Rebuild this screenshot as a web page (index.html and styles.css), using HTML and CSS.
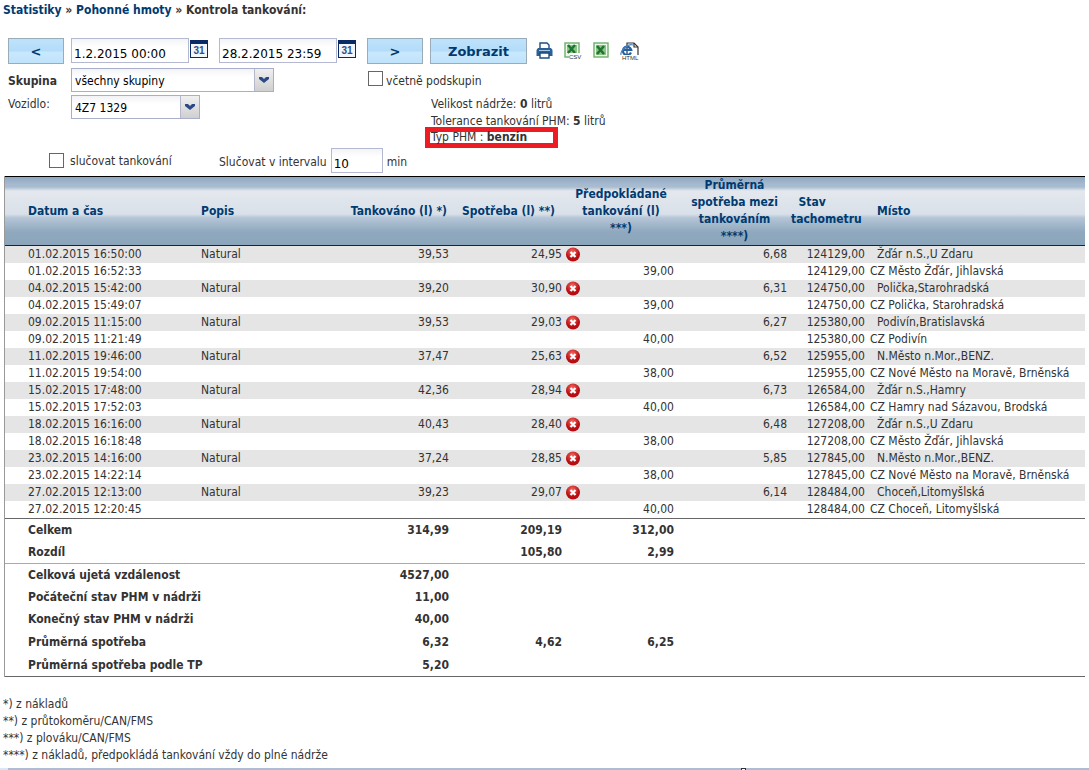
FILE: index.html
```html
<!DOCTYPE html>
<html lang="cs">
<head>
<meta charset="utf-8">
<title>Kontrola tankování</title>
<link rel="stylesheet" href="styles.css">
</head>
<body>
<nav class="crumbs"><a href="#">Statistiky</a> » <a href="#">Pohonné hmoty</a> » Kontrola tankování:</nav>

<form class="filters">
  <div class="toolbar">
    <button type="button" class="btn btn-step">&lt;</button>
    <div class="date">
      <input class="field field-date" type="text" aria-label="Od" value="1.2.2015 00:00">
      <button type="button" class="cal" aria-label="Kalendář">31</button>
    </div>
    <div class="date">
      <input class="field field-date" type="text" aria-label="Do" value="28.2.2015 23:59">
      <button type="button" class="cal" aria-label="Kalendář">31</button>
    </div>
    <button type="button" class="btn btn-step">&gt;</button>
    <button type="button" class="btn btn-show">Zobrazit</button>
    <div class="exports">
      <a href="#" aria-label="Tisk"><svg width="17" height="17" viewBox="0 0 17 17"><path d="M4 7V1h7l2 2v4" fill="#fff" stroke="#1d4f83" stroke-width="1.4"/><path d="M2 6h13l1.500 2v6H.5V8z" fill="#2a6094"/><path d="M3 8.500h11" stroke="#a9c9e6"/><path d="M4 11h9v5H4z" fill="#fff" stroke="#1d4f83" stroke-width="1.4"/></svg></a>
      <a href="#" aria-label="CSV"><svg width="18" height="18" viewBox="0 0 18 18"><rect x="1" y="1" width="14" height="14" fill="#edf6eb" stroke="#6fae6b" stroke-width="1.4"/><path d="M3 3h10v8H3z" fill="#8cc488"/><path d="M4 3l7 8M11 3l-7 8" stroke="#1e7430" stroke-width="2.5"/><rect x="5" y="11" width="13" height="7" fill="#fff"/><text x="5" y="17" class="tag">CSV</text></svg></a>
      <a href="#" aria-label="Excel"><svg width="16" height="16" viewBox="0 0 16 16"><rect x="1" y="1" width="14" height="14" fill="#edf6eb" stroke="#6fae6b" stroke-width="1.4"/><path d="M3 3h10v10H3z" fill="#8cc488"/><path d="M4 4l7 8M11 4l-7 8" stroke="#1e7430" stroke-width="2.6"/></svg></a>
      <a href="#" aria-label="HTML"><svg width="22" height="20" viewBox="0 0 22 20"><path d="M7 1h7l4 4v9H7z" fill="#fff" stroke="#333" stroke-width="1.2"/><path d="M14 1v4h4" fill="none" stroke="#333" stroke-width="1.2"/><path d="M11 10.500A4.200 4.200 0 1 1 11.200 7.800H3.500" fill="none" stroke="#2360a5" stroke-width="2.200"/><path d="M1 13C0 9 8 1 13 3" fill="none" stroke="#4c83bf" stroke-width="1.200"/><rect x="0" y="13" width="22" height="7" fill="#fff"/><text x="2" y="18" class="tag">HTML</text></svg></a>
    </div>
  </div>

  <div class="pickers">
    <label class="caption strong" for="group">Skupina</label>
    <span class="combo combo-group"><select id="group"><option>všechny skupiny</option></select><span class="arrow"><svg width="10" height="7" viewBox="0 0 10 7"><path d="M0 0h3l2 2 2-2h3v2L5 6 0 2z" fill="#2b4a86"/></svg></span></span>
    <label class="check"><input type="checkbox"> včetně podskupin</label>

    <label class="caption car" for="car">Vozidlo:</label>
    <span class="combo combo-car"><select id="car"><option>4Z7 1329</option></select><span class="arrow"><svg width="10" height="7" viewBox="0 0 10 7"><path d="M0 0h3l2 2 2-2h3v2L5 6 0 2z" fill="#2b4a86"/></svg></span></span>
    <div class="tank">
      <p>Velikost nádrže: <b>0</b> litrů</p>
      <p>Tolerance tankování PHM: <b>5</b> litrů</p>
      <p class="fuel">Typ PHM : <b>benzin</b></p>
    </div>
  </div>

  <div class="merge">
    <label class="check merge-check"><input type="checkbox"> slučovat tankování</label>
    <label for="gap">Slučovat v intervalu</label>
    <input id="gap" class="field field-gap" type="text" value="10">
    <span>min</span>
  </div>
</form>

<table class="report">
  <colgroup><col class="w-date"><col class="w-desc"><col class="w-fuel"><col class="w-used"><col class="w-flag"><col class="w-est"><col class="w-avg"><col class="w-odo"><col></colgroup>
  <thead>
    <tr><th class="date-cell left">Datum a čas</th><th class="left">Popis</th><th class="right">Tankováno (l) *)</th><th>Spotřeba (l) **)</th><th colspan="2">Předpokládané<br>tankování (l)<br>***)</th><th>Průměrná<br>spotřeba mezi<br>tankováním<br>****)</th><th class="odo-head left">&nbsp; Stav tachometru</th><th class="place left">Místo</th></tr>
  </thead>
  <tbody class="rows" id="rows"></tbody>
  <tbody class="totals">
    <tr><th>Celkem</th><td></td><td>314,99</td><td class="used">209,19</td><td></td><td>312,00</td><td></td><td></td><td></td></tr>
    <tr><th>Rozdíl</th><td></td><td></td><td class="used">105,80</td><td></td><td>2,99</td><td></td><td></td><td></td></tr>
  </tbody>
  <tbody class="totals summary">
    <tr><th colspan="2">Celková ujetá vzdálenost</th><td>4527,00</td><td></td><td></td><td></td><td></td><td></td><td></td></tr>
    <tr><th colspan="2">Počáteční stav PHM v nádrži</th><td>11,00</td><td></td><td></td><td></td><td></td><td></td><td></td></tr>
    <tr><th colspan="2">Konečný stav PHM v nádrži</th><td>40,00</td><td></td><td></td><td></td><td></td><td></td><td></td></tr>
    <tr><th colspan="2">Průměrná spotřeba</th><td>6,32</td><td class="used">4,62</td><td></td><td>6,25</td><td></td><td></td><td></td></tr>
    <tr><th colspan="2">Průměrná spotřeba podle TP</th><td>5,20</td><td></td><td></td><td></td><td></td><td></td><td></td></tr>
  </tbody>
</table>

<footer class="notes">
  <p>*) z nákladů</p>
  <p>**) z průtokoměru/CAN/FMS</p>
  <p>***) z plováku/CAN/FMS</p>
  <p>****) z nákladů, předpokládá tankování vždy do plné nádrže</p>
</footer>
<div class="splitter"><span class="grip"></span></div>
<script src="report.js"></script>
</body>
</html>
```
FILE: styles.css
```css
* { box-sizing: border-box; }
body {
  margin: 0;
  background: #fff;
  color: #333;
  font: 12px/17px "DejaVu Sans Condensed", "DejaVu Sans", "Noto Sans", sans-serif;
  overflow: hidden;
}
p { margin: 0; }
a { color: #003a70; text-decoration: none; }
.crumbs { padding: 2px 3px 0; font-weight: bold; }

.filters { padding: 19px 8px 0; }
.toolbar { display: flex; align-items: flex-start; gap: 7px; }
.btn {
  height: 26px;
  padding: 0;
  border: 1px solid #9aabba;
  background: linear-gradient(#bfe2fb, #b3dcf9 50%, #c9e8fd 55%, #bfe3fb);
  color: #003a70;
  font: bold 13px "DejaVu Sans", sans-serif;
}
.btn-step { width: 56px; }
.btn-show { width: 97px; }
.date { display: flex; gap: 1px; margin-right: 4px; }
.field {
  height: 25px;
  padding: 7px 2px 0;
  border: 1px solid #b4b8d0;
  background: linear-gradient(#f2f3f6, #fff 8px);
  color: #000;
  font: 12px "DejaVu Sans", sans-serif;
}
.field-date { width: 118px; }
.cal {
  width: 18px;
  height: 18px;
  margin-top: 2px;
  padding: 0;
  border: 1px solid #0a2a66;
  border-top-width: 4px;
  background: #f2f5fa;
  color: #2d4f8c;
  font: bold 10px/12px "Liberation Sans", sans-serif;
}
.exports { display: flex; align-items: flex-start; gap: 11px; padding: 4px 0 0 2px; }
.exports svg { display: block; }
.tag { font: 6px "Liberation Sans", sans-serif; fill: #333; }

.pickers {
  display: grid;
  grid-template-columns: 63px 297px 1fr;
  grid-template-rows: 24px 53px;
  row-gap: 3px;
  margin-top: 4px;
}
.caption { padding-top: 5px; }
.car { padding-top: 1px; }
.strong { font-weight: bold; }
.combo { position: relative; height: 24px; }
.combo-group { width: 203px; }
.combo-car { width: 129px; }
.combo select {
  width: 100%;
  height: 100%;
  padding: 3px 3px 0;
  border: 1px solid #a9aecb;
  border-radius: 0;
  appearance: none;
  background: linear-gradient(#f2f3f6, #fff 8px);
  color: #000;
  font: inherit;
}
.arrow {
  position: absolute;
  top: 1px;
  right: 1px;
  bottom: 1px;
  width: 19px;
  display: flex;
  align-items: center;
  justify-content: center;
  border-left: 1px solid #b4b8cc;
  background: linear-gradient(#f0f0f0, #cfcfcf);
  pointer-events: none;
}
.check { display: flex; align-items: flex-start; gap: 3px; line-height: 26px; }
.check input {
  width: 15px;
  height: 15px;
  margin: 3px 0 0;
  border: 1px solid #666;
  appearance: none;
  background: #fff;
}
.tank { padding: 1px 0 0 63px; }
.fuel {
  width: 133px;
  margin: -3px 0 0 -6px;
  padding-left: 1px;
  border: 5px solid #ed1c24;
  line-height: 11px;
}
.merge { display: flex; align-items: center; gap: 4px; padding-left: 41px; }
.merge label, .merge span { padding-top: 4px; }
.merge .merge-check { width: 166px; gap: 6px; padding: 0; line-height: 22px; }
.field-gap { width: 52px; }

.report {
  width: calc(100% - 8px);
  margin: 3px 4px 0;
  border-collapse: separate;
  border-spacing: 0;
  table-layout: fixed;
  border-left: 1px solid #999;
}
.w-date { width: 192px; }
.w-desc { width: 141px; }
.w-fuel { width: 115px; }
.w-used { width: 111px; }
.w-flag { width: 18px; }
.w-est { width: 96px; }
.w-avg { width: 113px; }
.w-odo { width: 76px; }
.report td, .report th { padding: 0 4px; }
.report thead tr {
  height: 70px;
  background: linear-gradient(#8aa5bf, #a5b9cf 8px, #a9bcd0 11px, #e4e8ee 15px, #d9e0e9 38px, #b4c5d6 42px, #8fa8be 56px, #8aa5bb);
}
.report thead th {
  border-top: 1px solid #000;
  border-bottom: 1px solid #222;
  color: #003a70;
}
.report .left { text-align: left; }
.report .right { text-align: right; padding-right: 6px; }
.report thead .odo-head { padding: 0; }
.report thead .date-cell, .rows td:first-child { padding-left: 23px; }
.rows tr { height: 17px; }
.rows tr:nth-child(odd) { background: #e5e5e5; }
.rows td { text-align: right; white-space: nowrap; line-height: 17px; }
.rows td:nth-child(-n+2), .rows td:last-child { text-align: left; }
.rows td.flag { padding: 0 2px; }
.flag svg { display: block; }
.rows td:nth-child(8) { padding: 0 2px 0 0; }
.rows td:last-child { padding-left: 3px; }
.report thead .place, .rows td.place:last-child { padding-left: 10px; }
.report td.used { padding-right: 2px; }
.totals td { text-align: right; font-weight: bold; }
.report .totals th { padding-left: 23px; text-align: left; }
.totals tr { height: 23px; }
.totals tr:nth-child(2) { height: 22px; }
.totals tr:first-child > * { border-top: 1px solid #666; }
.summary tr:first-child > * { border-top-color: #aaa; }
.summary tr:last-child > * { border-bottom: 1px solid #666; }

.notes { padding: 19px 3px 0; }
.splitter {
  height: 2px;
  margin-top: 4px;
  display: flex;
  justify-content: center;
  padding-left: 390px;
  border-left: 8px solid #dbe6f4;
  background: #aebcd5;
}
.grip { width: 5px; height: 2px; border: 1px solid #333; border-bottom: 0; background: #fff; }
```
FILE: report.js
```js
const fills = [
  ["01.02.2015 16:50:00", "39,53", "24,95", "6,68", "124129,00", "Žďár n.S.,U Zdaru", "01.02.2015 16:52:33", "39,00", "CZ Město Žďár, Jihlavská"],
  ["04.02.2015 15:42:00", "39,20", "30,90", "6,31", "124750,00", "Polička,Starohradská", "04.02.2015 15:49:07", "39,00", "CZ Polička, Starohradská"],
  ["09.02.2015 11:15:00", "39,53", "29,03", "6,27", "125380,00", "Podivín,Bratislavská", "09.02.2015 11:21:49", "40,00", "CZ Podivín"],
  ["11.02.2015 19:46:00", "37,47", "25,63", "6,52", "125955,00", "N.Město n.Mor.,BENZ.", "11.02.2015 19:54:00", "38,00", "CZ Nové Město na Moravě, Brněnská"],
  ["15.02.2015 17:48:00", "42,36", "28,94", "6,73", "126584,00", "Žďár n.S.,Hamry", "15.02.2015 17:52:03", "40,00", "CZ Hamry nad Sázavou, Brodská"],
  ["18.02.2015 16:16:00", "40,43", "28,40", "6,48", "127208,00", "Žďár n.S.,U Zdaru", "18.02.2015 16:18:48", "38,00", "CZ Město Žďár, Jihlavská"],
  ["23.02.2015 14:16:00", "37,24", "28,85", "5,85", "127845,00", "N.Město n.Mor.,BENZ.", "23.02.2015 14:22:14", "38,00", "CZ Nové Město na Moravě, Brněnská"],
  ["27.02.2015 12:13:00", "39,23", "29,07", "6,14", "128484,00", "Choceň,Litomyšlská", "27.02.2015 12:20:45", "40,00", "CZ Choceň, Litomyšlská"]
];
const cross = '<svg width="14" height="15" viewBox="0 0 14 15"><defs><radialGradient id="red" cx="45%" cy="30%"><stop offset="0" stop-color="#f46a62"/><stop offset="1" stop-color="#b80d12"/></radialGradient></defs><circle cx="7" cy="7.500" r="7" fill="url(#red)"/><path d="M4.500 5l5 5M9.500 5l-5 5" stroke="#fff" stroke-width="2.200"/></svg>';
document.getElementById("rows").innerHTML = fills.map(([date, fuel, used, avg, odo, place, date2, est, place2]) =>
  `<tr><td>${date}</td><td>Natural</td><td>${fuel}</td><td class="used">${used}</td><td class="flag">${cross}</td><td></td><td>${avg}</td><td>${odo}</td><td class="place">${place}</td></tr>
   <tr><td>${date2}</td><td></td><td></td><td></td><td></td><td>${est}</td><td></td><td>${odo}</td><td>${place2}</td></tr>`).join("");
```
